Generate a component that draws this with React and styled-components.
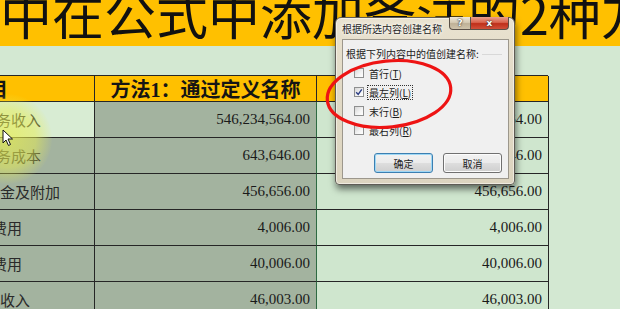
import styled, { createGlobalStyle } from 'styled-components'

const GlobalStyle = createGlobalStyle`
  body {
    margin: 0;
    background: #d3e8d2;
  }
`

const rows = [
  { label: '务收入', indent: -3, amount: '546,234,564.00', active: true },
  { label: '务成本', indent: -3, amount: '643,646.00' },
  { label: '金及附加', indent: 1, amount: '456,656.00' },
  { label: '费用', indent: -7, amount: '4,006.00' },
  { label: '费用', indent: -7, amount: '40,006.00' },
  { label: '收入', indent: 1, amount: '46,003.00' },
]

const options = [
  { text: '首行', key: 'T', checked: false },
  { text: '最左列', key: 'L', checked: true, focused: true },
  { text: '末行', key: 'B', checked: false },
  { text: '最右列', key: 'R', checked: false },
]

const tones = {
  head: '#ffc000',
  active: '#d8ecd3',
  picked: '#a3b39f',
  plain: '#cfe6ce',
}

const App = () => {
  return (
    <Screen>
      <GlobalStyle />
      <TitleBand>中在公式中添加备注的2种方法</TitleBand>
      <Gap />
      <Sheet>
        <Row $h={26}>
          <Cell $tone="head">
            <HeadText $indent={-11}>目</HeadText>
          </Cell>
          <Cell $tone="head" $align="center">
            <HeadText>方法1：通过定义名称</HeadText>
          </Cell>
          <Cell $tone="head" $align="center" />
        </Row>
        {rows.map((r, i) => (
          <Row key={i} $h={36}>
            <Cell $tone={r.active ? 'active' : 'picked'}>
              <Label $indent={r.indent}>{r.label}</Label>
            </Cell>
            <Cell $tone="picked" $align="right" $edge="#2e6a42">
              <Amount>{r.amount}</Amount>
            </Cell>
            <Cell $tone="plain" $align="right">
              <Amount>{r.amount}</Amount>
            </Cell>
          </Row>
        ))}
      </Sheet>

      <Glow />
      <Cursor width="12" height="18" viewBox="0 0 12 18">
        <path d="M1 1 L1 14 L4 11 L6.5 16.5 L8.5 15.5 L6 10 L10.5 10 Z" fill="#fff" stroke="#111" strokeWidth="1" strokeLinejoin="round" />
      </Cursor>

      <Dialog>
        <TitleBar>
          <DialogTitle>根据所选内容创建名称</DialogTitle>
          <Caption>
            <CapButton $kind="help">?</CapButton>
            <CapButton $kind="close">x</CapButton>
          </Caption>
        </TitleBar>
        <Client>
          <Prompt>
            <span>根据下列内容中的值创建名称:</span>
            <Rule />
          </Prompt>
          <Options>
            {options.map((o) => (
              <Option key={o.key}>
                <Box>
                  {o.checked && (
                    <svg width="8" height="8" viewBox="0 0 8 8">
                      <path d="M1.2 4.2 L3.2 6.4 L6.8 1.4" fill="none" stroke="#2b3d84" strokeWidth="1.4" />
                    </svg>
                  )}
                </Box>
                <OptionText $focused={o.focused}>
                  {o.text}(<u>{o.key}</u>)
                </OptionText>
              </Option>
            ))}
          </Options>
          <Buttons>
            <Btn $default>确定</Btn>
            <Btn>取消</Btn>
          </Buttons>
        </Client>
      </Dialog>

      <Ring width="150" height="95" viewBox="0 0 150 95">
        <ellipse cx="69" cy="44" rx="62" ry="33" fill="none" stroke="#ee1414" strokeWidth="3.2" transform="rotate(-6 69 44)" />
      </Ring>
    </Screen>
  )
}

export default App

const Screen = styled.div`
  position: relative;
  width: 620px;
  height: 309px;
  overflow: hidden;
  background: #d3e8d2;
`

const TitleBand = styled.div`
  height: 46px;
  background: #ffc000;
  overflow: hidden;
  white-space: nowrap;
  font-family: "Noto Sans CJK SC", sans-serif;
  font-size: 52px;
  line-height: 25px;
  color: #111;
  padding-left: 0;
`

const Gap = styled.div`
  height: 29px;
`

const Sheet = styled.div`
  width: 549px;
  margin-left: -1px;
  border-top: 1px solid #262626;
`

const Row = styled.div`
  display: grid;
  grid-template-columns: 96px 222px 232px;
  height: ${(p) => p.$h}px;
`

const Cell = styled.div`
  display: flex;
  align-items: center;
  justify-content: ${(p) =>
    p.$align === 'right' ? 'flex-end' : p.$align === 'center' ? 'center' : 'flex-start'};
  padding-right: ${(p) => (p.$align === 'right' ? '6px' : '0')};
  background: ${(p) => tones[p.$tone]};
  border-right: 1px solid ${(p) => p.$edge || '#262626'};
  border-bottom: 1px solid #262626;
  overflow: hidden;
  white-space: nowrap;
`

const HeadText = styled.span`
  margin-left: ${(p) => p.$indent || 0}px;
  font-family: "Liberation Serif", "Noto Sans CJK SC", serif;
  font-weight: bold;
  font-size: 20px;
  color: #151515;
`

const Label = styled.span`
  margin-left: ${(p) => p.$indent}px;
  font-family: "Noto Sans CJK SC", serif;
  font-size: 15px;
  color: #2a2a2a;
`

const Amount = styled.span`
  font-family: "Liberation Serif", serif;
  font-size: 15px;
  color: #1a1a1a;
`

const Glow = styled.div`
  position: absolute;
  left: -38px;
  top: 94px;
  width: 90px;
  height: 90px;
  border-radius: 50%;
  background: radial-gradient(circle, rgba(232, 238, 80, 0.7) 0%, rgba(232, 238, 80, 0.5) 45%, rgba(232, 238, 80, 0) 72%);
  pointer-events: none;
`

const Cursor = styled.svg`
  position: absolute;
  left: 2px;
  top: 129px;
`

const Dialog = styled.div`
  position: absolute;
  left: 335px;
  top: 17px;
  width: 180px;
  height: 168px;
  box-sizing: border-box;
  display: flex;
  flex-direction: column;
  padding: 0 5px 5px 6px;
  background: linear-gradient(180deg, #e9e2d0 0%, #e2dac6 40%, #dcd4bf 100%);
  border: 1px solid #5f5c55;
  border-radius: 6px 6px 4px 4px;
  box-shadow: 1px 4px 7px rgba(0, 0, 0, 0.55), inset 0 0 0 1px rgba(255, 255, 255, 0.5);
  font-family: "Noto Sans CJK SC", sans-serif;
  font-size: 10px;
  color: #1c1c1c;
`

const TitleBar = styled.div`
  height: 21px;
  display: flex;
  justify-content: space-between;
  align-items: flex-start;
`

const DialogTitle = styled.div`
  padding-top: 4px;
  font-size: 10px;
  line-height: 14px;
  color: #262626;
  text-shadow: 0 0 3px #fff, 0 0 5px #fff;
`

const Caption = styled.div`
  display: flex;
  margin-top: -1px;
`

const CapButton = styled.div`
  height: 13px;
  width: ${(p) => (p.$kind === 'close' ? '38px' : '22px')};
  display: flex;
  align-items: center;
  justify-content: center;
  box-sizing: border-box;
  overflow: hidden;
  border: 1px solid #5a5048;
  border-top: none;
  border-radius: ${(p) => (p.$kind === 'close' ? '0 0 4px 0' : '0 0 0 4px')};
  border-left: ${(p) => (p.$kind === 'close' ? 'none' : '1px solid #5a5048')};
  background: ${(p) =>
    p.$kind === 'close'
      ? 'linear-gradient(180deg, #eba08c 0%, #d9634d 45%, #bf2f1a 55%, #d0503a 100%)'
      : 'linear-gradient(180deg, #eee6d6 0%, #d6cbb4 45%, #bfb197 55%, #cfc3ab 100%)'};
  color: #fff;
  font-family: "DejaVu Sans", sans-serif;
  font-weight: bold;
  font-size: 9px;
  line-height: 9px;
  text-shadow: 0 0 2px #333, 0 0 1px #333;
`

const Client = styled.div`
  flex: 1;
  display: flex;
  flex-direction: column;
  padding: 7px 6px 5px 3px;
  background: #f0f0f0;
  border: 1px solid #9c978c;
`

const Prompt = styled.div`
  display: flex;
  align-items: center;
  gap: 3px;
  height: 14px;
  line-height: 14px;
  white-space: nowrap;
`

const Rule = styled.div`
  flex: 1;
  height: 1px;
  background: #d8d8d8;
`

const Options = styled.div`
  display: flex;
  flex-direction: column;
  gap: 5px;
  margin-top: 5px;
  padding-left: 8px;
`

const Option = styled.div`
  display: flex;
  align-items: center;
  gap: 4px;
  height: 14px;
`

const Box = styled.div`
  width: 10px;
  height: 10px;
  box-sizing: border-box;
  border: 1px solid #8e8f8f;
  background: linear-gradient(135deg, #d6d6d6 0%, #f4f4f4 60%, #ffffff 100%);
  display: flex;
  align-items: center;
  justify-content: center;
`

const OptionText = styled.span`
  padding: 0 1px;
  line-height: 13px;
  outline: ${(p) => (p.$focused ? '1px dotted #333' : 'none')};
  u {
    text-decoration: underline;
  }
`

const Buttons = styled.div`
  margin-top: auto;
  display: flex;
  justify-content: flex-end;
  gap: 10px;
`

const Btn = styled.div`
  width: 59px;
  height: 20px;
  box-sizing: border-box;
  display: flex;
  align-items: center;
  justify-content: center;
  border: 1px solid ${(p) => (p.$default ? '#3c7fb1' : '#707070')};
  border-radius: 3px;
  background: linear-gradient(180deg, #f2f2f2 0%, #ebebeb 48%, #dddddd 52%, #cfcfcf 100%);
  box-shadow: ${(p) => (p.$default ? 'inset 0 0 0 1px #9fd8f5' : 'inset 0 0 0 1px #fcfcfc')};
  font-size: 10px;
`

const Ring = styled.svg`
  position: absolute;
  left: 320px;
  top: 50px;
  pointer-events: none;
`
